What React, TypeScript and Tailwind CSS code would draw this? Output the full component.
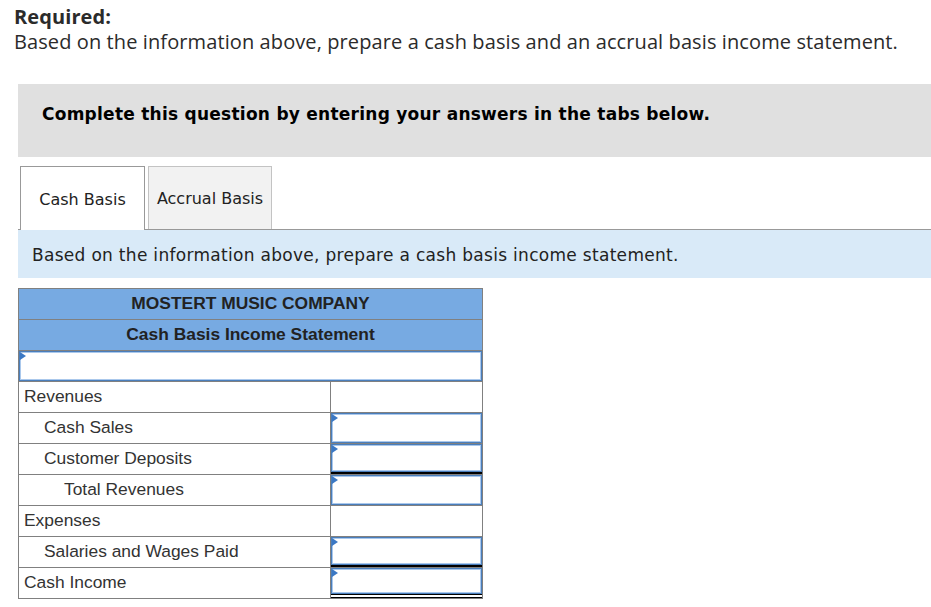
import React from 'react';

type Row = {
  label: string;
  indent: 0 | 1 | 2;
  input: boolean;
  underline?: 'single' | 'double';
};

const rows: Row[] = [
  { label: 'Revenues', indent: 0, input: false },
  { label: 'Cash Sales', indent: 1, input: true },
  { label: 'Customer Deposits', indent: 1, input: true, underline: 'single' },
  { label: 'Total Revenues', indent: 2, input: true },
  { label: 'Expenses', indent: 0, input: false },
  { label: 'Salaries and Wages Paid', indent: 1, input: true, underline: 'single' },
  { label: 'Cash Income', indent: 0, input: true, underline: 'double' },
];

const indentClass = ['pl-[5px]', 'pl-[25px]', 'pl-[45px]'];

const Marker = () => (
  <span className="absolute left-0 top-0 w-0 h-0 border-y-[4px] border-y-transparent border-l-[6px] border-l-[#3b78c4]" />
);

const InputCell = ({ underline }: { underline?: 'single' | 'double' }) => (
  <div
    className={`h-full flex flex-col ${
      underline === 'double'
        ? 'border-b-[4px] border-double border-b-black'
        : underline === 'single'
        ? 'border-b-2 border-b-black'
        : ''
    }`}
  >
    <div className="relative flex-1 border border-[#4a7ebb] shadow-[inset_0_0_0_1px_#aac8ec] bg-white">
      <Marker />
    </div>
  </div>
);

export default function App() {
  return (
    <div className="w-[931px] h-[607px] overflow-hidden bg-white text-[#222]">
      <div className="pl-[14px] pt-[4px] font-['Open_Sans',sans-serif] text-[20px] leading-[25px] tracking-[0.1px] text-[#2b2b2b]">
        <div className="font-bold">Required:</div>
        <div>Based on the information above, prepare a cash basis and an accrual basis income statement.</div>
      </div>

      <div className="ml-[18px] mt-[30px] h-[73px] bg-[#e0e0e0] pl-[24px] pt-[20px]">
        <div className="font-['DejaVu_Sans',sans-serif] font-bold text-[17px] leading-[20px] tracking-[0.25px] text-black">
          Complete this question by entering your answers in the tabs below.
        </div>
      </div>

      <div className="ml-[18px] mt-[9px] flex items-end border-b border-[#999] h-[64px] font-['DejaVu_Sans',sans-serif] text-[16px] text-[#222]">
        <div className="ml-[2px] h-[64px] w-[125px] bg-white border border-[#999] border-b-0 -mb-px pt-[2px] flex items-center justify-center">
          Cash Basis
        </div>
        <div className="ml-[3px] h-[63px] w-[124px] bg-[#f2f2f2] border border-[#c3c3c3] border-b-0 pt-[2px] flex items-center justify-center">
          Accrual Basis
        </div>
      </div>

      <div className="ml-[18px] h-[48px] bg-[#d9eaf8] flex items-center pl-[14px] pt-[4px] font-['DejaVu_Sans',sans-serif] text-[17px] tracking-[0.3px] text-[#222]">
        Based on the information above, prepare a cash basis income statement.
      </div>

      <div className="ml-[18px] mt-[10px] w-[465px] font-['Liberation_Sans',Arial,sans-serif] text-[17.4px] leading-[20px] text-[#333]">
        <div className="border border-[#808080] bg-[#77aae2]">
          <div className="h-[31px] pb-[3px] flex items-center justify-center font-bold text-[#222] border-b border-[#808080]">
            MOSTERT MUSIC COMPANY
          </div>
          <div className="h-[31px] pb-[3px] flex items-center justify-center font-bold text-[#222] border-b border-[#808080]">
            Cash Basis Income Statement
          </div>
          <div className="h-[30px] bg-white">
            <div className="relative h-full border border-[#4a7ebb] shadow-[inset_0_0_0_1px_#aac8ec]">
              <Marker />
            </div>
          </div>
        </div>
        <div className="border-x border-[#808080]">
          {rows.map((r) => (
            <div key={r.label} className="flex h-[31px] border-b border-[#808080]">
              <div className={`w-[312px] pb-[2px] border-r border-[#808080] flex items-center ${indentClass[r.indent]}`}>
                {r.label}
              </div>
              <div className="flex-1">{r.input && <InputCell underline={r.underline} />}</div>
            </div>
          ))}
        </div>
      </div>
    </div>
  );
}
